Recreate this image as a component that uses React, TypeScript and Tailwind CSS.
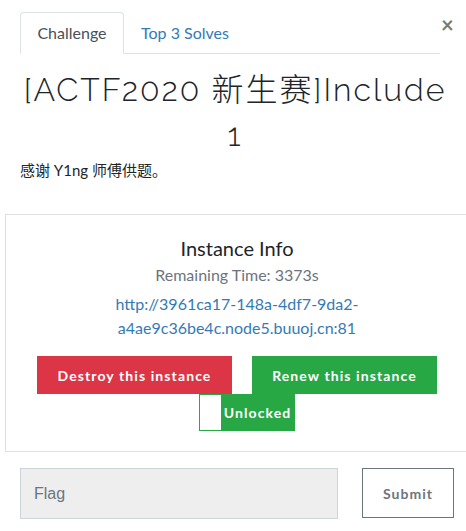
import React from "react";

export default function App() {
  return (
    <div className="w-[466px] h-[531px] overflow-hidden bg-white relative" style={{ fontFamily: "Lato, 'Noto Sans CJK SC', sans-serif" }}>
      <button className="absolute left-[441px] top-[14px] text-[#7a7a7a] text-[22px] leading-none font-bold">×</button>
      <div className="pt-[12px] px-[20px]">
        <div className="flex w-[420px] border-b border-[#dee2e6] h-[42px]">
          <div className="w-[104px] h-[42px] border border-[#dee2e6] border-b-white rounded-t-[4px] bg-white flex items-center justify-center text-[16px] text-[#495057] -mb-px">
            Challenge
          </div>
          <div className="px-[17px] h-[42px] flex items-center text-[16px] text-[#337ab7]">Top 3 Solves</div>
        </div>
        <h2
          className="mt-[13px] mr-[-4px] break-keep text-center text-[32px] leading-[45px] font-light text-[#212529] tracking-[2px]"
          style={{ fontFamily: "Raleway, Lato, 'Noto Sans CJK SC', sans-serif" }}
        >
          [ACTF2020 新生赛]Include 1
        </h2>
        <p className="mt-[3px] text-[15px] leading-[21px] text-[#212529]">感谢 Y1ng 师傅供题。</p>
      </div>
      <div className="ml-[5px] mt-[33px] w-[464px] border border-[#dfdfdf] pt-[19px] pb-[20px] flex flex-col items-center">
        <div className="text-[20px] leading-[28px] text-[#212529]">Instance Info</div>
        <div className="mt-[2px] text-[16px] leading-[22px] text-[#6c757d]">Remaining Time: 3373s</div>
        <div className="mt-[6px] text-[16px] leading-[24px] text-[#337ab7] text-center w-[270px]">
          http://3961ca17-148a-4df7-9da2-a4ae9c36be4c.node5.buuoj.cn:81
        </div>
        <div className="mt-[16px] flex gap-[20px]">
          <button className="w-[195px] h-[38px] bg-[#dc3545] text-white font-bold text-[14px] tracking-[1.1px]">Destroy this instance</button>
          <button className="w-[185px] h-[38px] bg-[#28a745] text-white font-bold text-[14px] tracking-[1.1px]">Renew this instance</button>
        </div>
        <div className="ml-[20px] flex h-[37px] w-[96px] border border-[#28a745] bg-[#28a745]">
          <div className="w-[21px] h-full bg-white"></div>
          <div className="flex-1 flex items-center justify-center text-white font-bold text-[14px] tracking-[1.1px]">Unlocked</div>
        </div>
      </div>
      <div className="mt-[16px] pl-[20px] flex gap-[24px]">
        <input
          className="shrink-0 w-[318px] h-[51px] bg-[#eeeeee] border border-[#ced4da] px-[13px] text-[16px] outline-none placeholder:text-[#6c757d]"
          style={{ fontFamily: "'Liberation Sans', Arial, sans-serif" }}
          placeholder="Flag"
        />
        <button className="shrink-0 w-[92px] h-[50px] border border-[#6c757d] text-[#6c757d] font-bold text-[14px] tracking-[1px]">Submit</button>
      </div>
    </div>
  );
}
